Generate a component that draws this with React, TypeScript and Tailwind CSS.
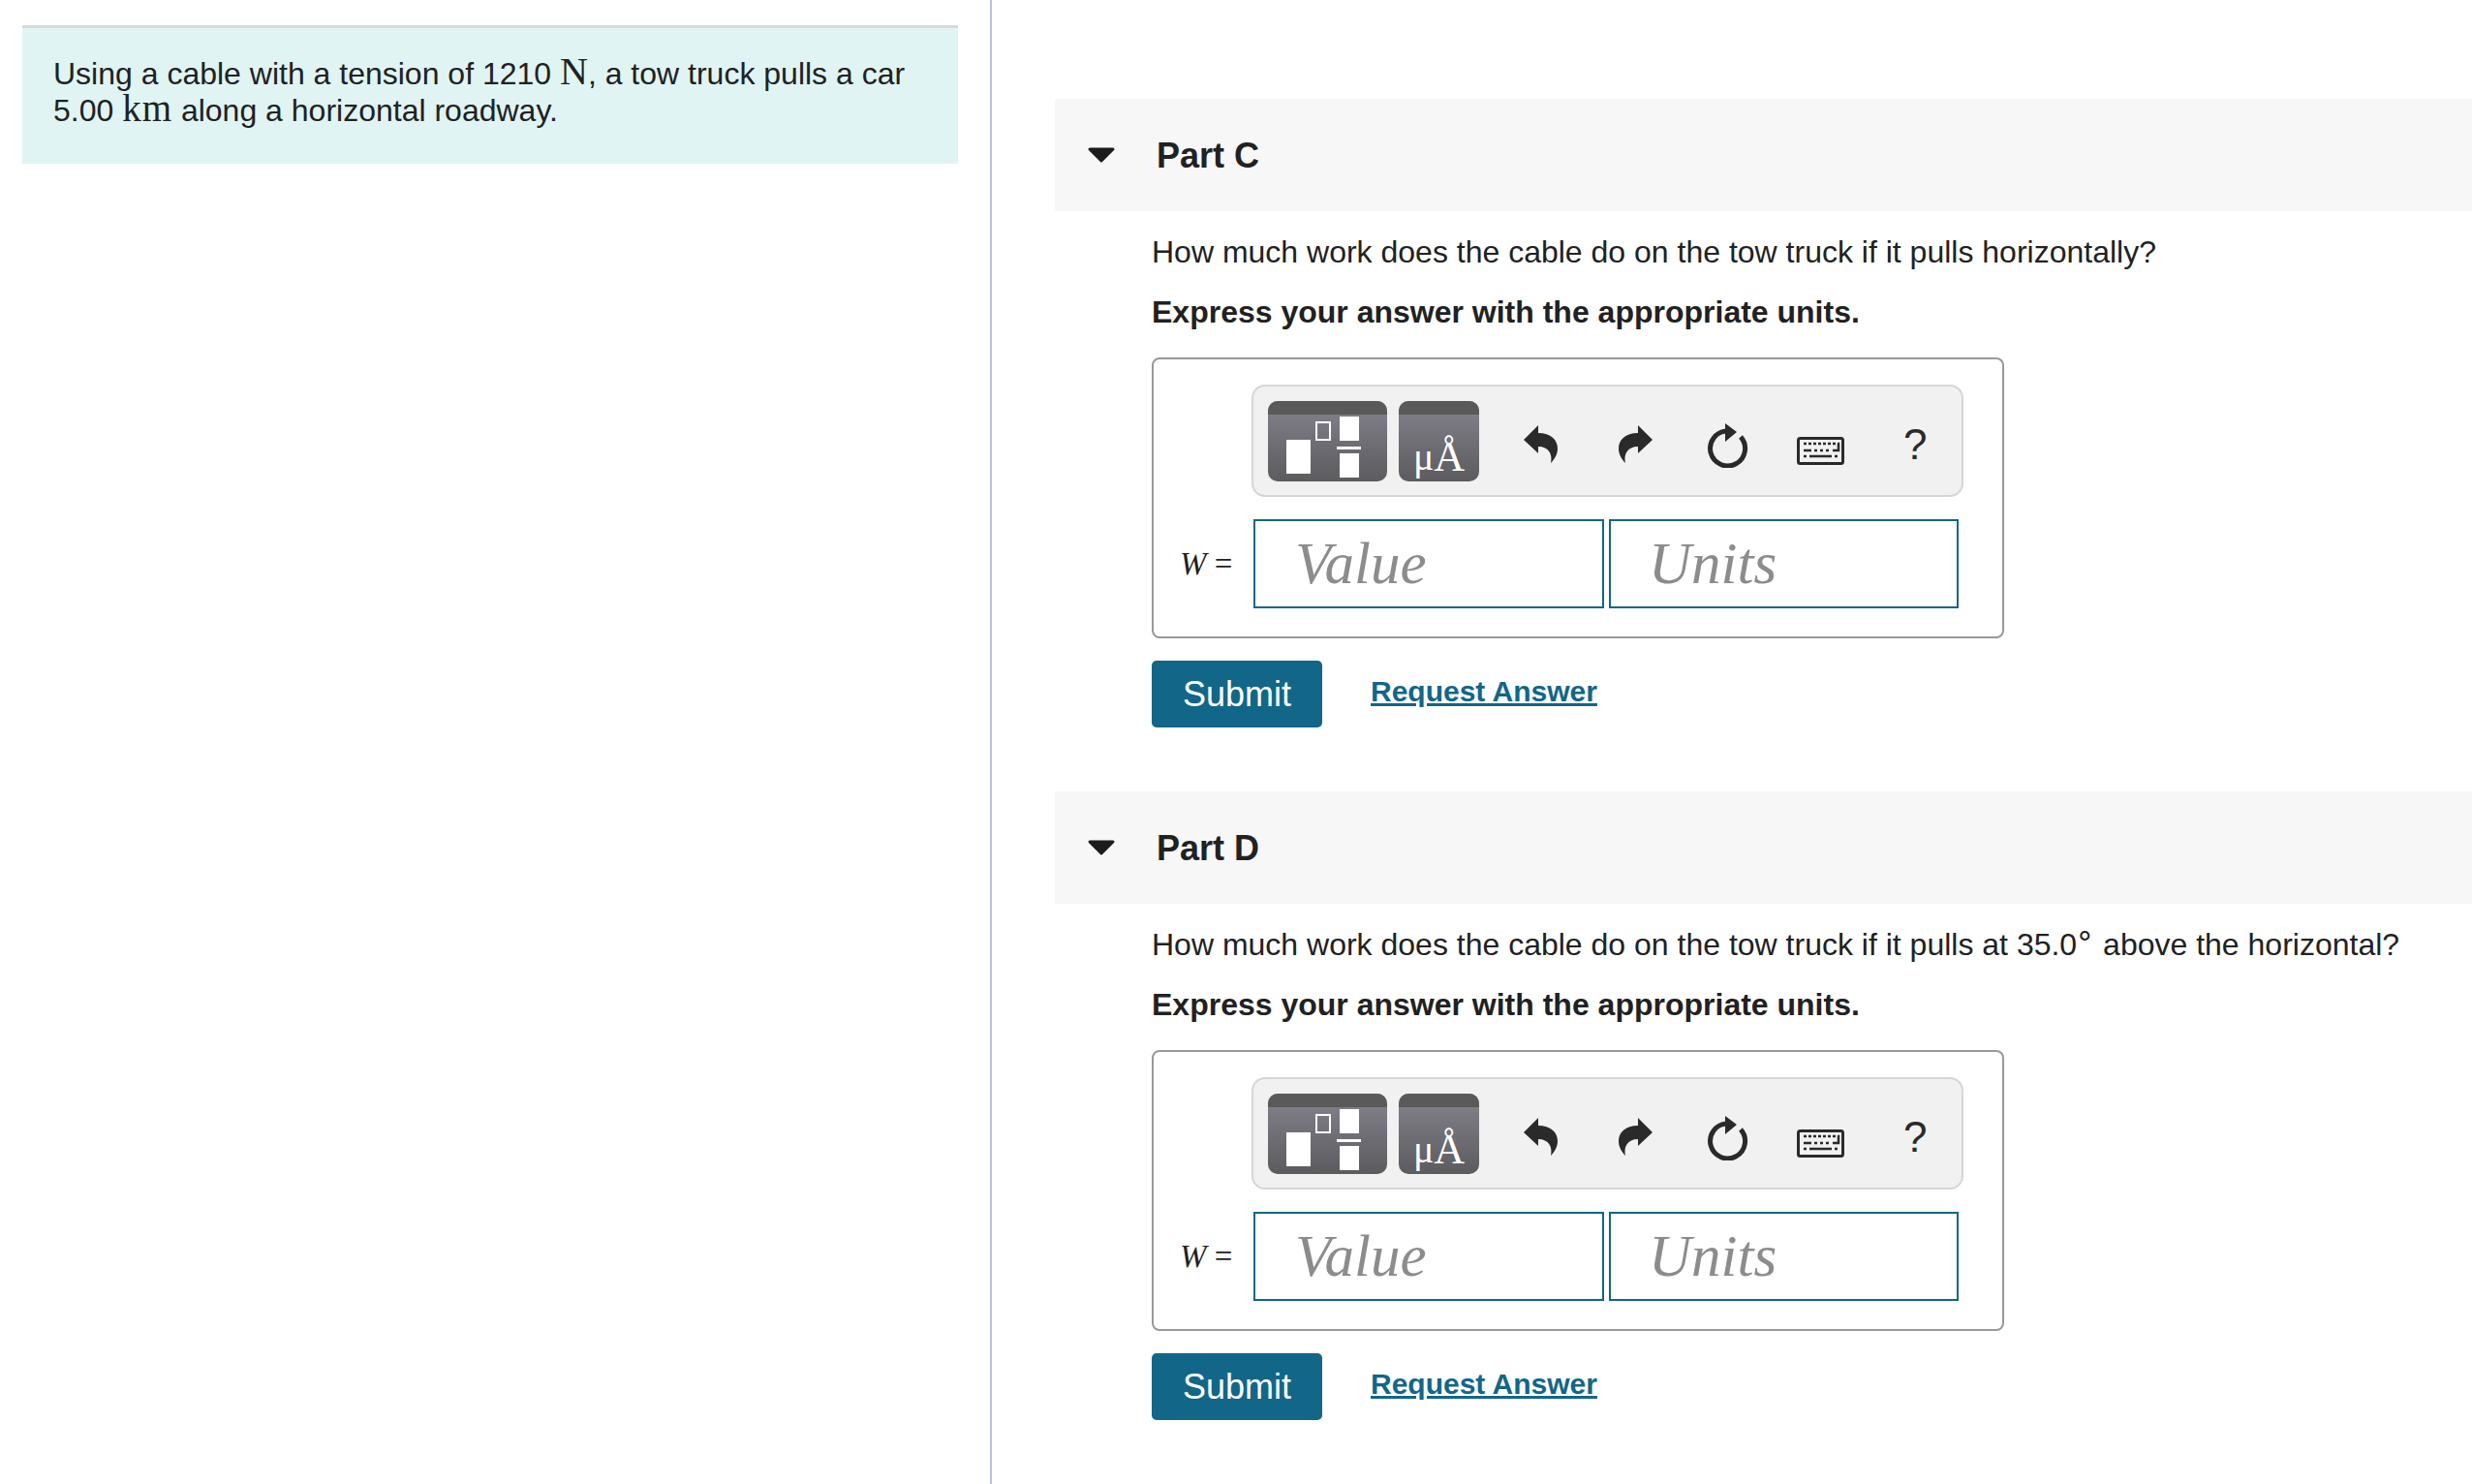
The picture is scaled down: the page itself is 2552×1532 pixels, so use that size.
const sans = "font-['Liberation_Sans',Arial,sans-serif]"

function TemplateButton() {
  return (
    <div className="flex h-[83px] w-[123px] flex-col overflow-hidden rounded-[10px] bg-gradient-to-b from-[#85848f] to-[#5c5b5e]">
      <div className="h-[14px] bg-[#5a5a5a]" />
      <svg width="123" height="69" viewBox="0 0 123 69">
        <rect x="19" y="26" width="25" height="35" fill="#fff" />
        <rect x="50" y="8" width="14" height="18" fill="none" stroke="#fff" strokeWidth="2" />
        <rect x="74" y="2" width="20" height="25" fill="#fff" />
        <rect x="71" y="33" width="25" height="3" fill="#fff" />
        <rect x="74" y="40" width="20" height="25" fill="#fff" />
      </svg>
    </div>
  )
}

function SymbolButton() {
  return (
    <div className="flex h-[83px] w-[83px] flex-col overflow-hidden rounded-[10px] bg-gradient-to-b from-[#85848f] to-[#5c5b5e]">
      <div className="h-[14px] bg-[#5a5a5a]" />
      <div className="flex flex-1 items-end justify-center font-['Liberation_Serif',serif] text-[44px] leading-[50px] text-white">
        <span className="text-[40px]">μ</span>
        <span>Å</span>
      </div>
    </div>
  )
}

function Undo({ flip }: { flip?: boolean }) {
  return (
    <svg width="35" height="40" viewBox="0 0 35 40" className={flip ? "-scale-x-100" : ""}>
      <path d="M0 15 L15 0 V8 C28 8 35 15 35 24 C35 30 32 35 28 39 C30 30 26 22 15 22 V29 Z" fill="#2a2a2a" />
    </svg>
  )
}

function Reset() {
  return (
    <svg width="44" height="46" viewBox="0 0 44 46">
      <path d="M22 8 A18 18 0 1 0 36 14" fill="none" stroke="#2a2a2a" strokeWidth="5" />
      <path d="M20 0 L32 9 L20 19 Z" fill="#2a2a2a" />
    </svg>
  )
}

function Keyboard() {
  return (
    <svg width="49" height="29" viewBox="0 0 49 29">
      <rect x="1.5" y="1.5" width="46" height="26" rx="2" fill="none" stroke="#2a2a2a" strokeWidth="3" />
      <path d="M7 7h3M12 7h3M17 7h3M22 7h3M27 7h3M32 7h3M37 7h3M42 7h1V14H37M7 14h8M18 14h3M24 14h3M30 14h3M7 20h3M13 20h23M39 20h3" stroke="#2a2a2a" strokeWidth="2.5" fill="none" />
    </svg>
  )
}

function AnswerBox() {
  return (
    <div className="mt-[27px] h-[290px] w-[880px] rounded-[8px] border-2 border-[#999] pl-[27px] pt-[26px]">
      <div className="ml-[74px] flex h-[116px] w-[735px] items-center rounded-[14px] border-2 border-[#d6d6d6] bg-[#f1f1f1] pl-[15px]">
        <TemplateButton />
        <div className="ml-[12px]">
          <SymbolButton />
        </div>
        <div className="ml-[46px] mt-[8px]">
          <Undo />
        </div>
        <div className="ml-[63px] mt-[8px]">
          <Undo flip />
        </div>
        <div className="ml-[55px] mt-[10px]">
          <Reset />
        </div>
        <div className="ml-[50px] mt-[21px]">
          <Keyboard />
        </div>
        <span className={`${sans} ml-[61px] mt-[8px] text-[44px] leading-none text-[#2a2a2a]`}>?</span>
      </div>
      <div className="mt-[23px] flex items-center">
        <div className="w-[76px] font-['Liberation_Serif',serif] text-[33px] leading-none text-[#212121]">
          <i>W</i> =
        </div>
        <div className="flex h-[92px] w-[362px] items-center border-2 border-[#126688] pl-[41px] font-['Liberation_Serif',serif] text-[61px] italic text-[#8c8c8c]">
          Value
        </div>
        <div className="ml-[5px] flex h-[92px] w-[361px] items-center border-2 border-[#126688] pl-[39px] font-['Liberation_Serif',serif] text-[61px] italic text-[#8c8c8c]">
          Units
        </div>
      </div>
    </div>
  )
}

function Part({ name, question }: { name: string; question: React.ReactNode }) {
  return (
    <section className="mb-[66px]">
      <div className="flex h-[116px] items-center bg-[#f7f7f7]">
        <svg width="30" height="18" viewBox="0 0 30 18" className="ml-[33px]">
          <path d="M3 3 H27 L15 15 Z" fill="#1c1c1c" stroke="#1c1c1c" strokeWidth="3" strokeLinejoin="round" />
        </svg>
        <h2 className="ml-[42px] pt-[1px] text-[36px] font-bold text-[#212121]">{name}</h2>
      </div>
      <div className="pl-[100px]">
        <p className="mt-[22px] whitespace-nowrap text-[32px] leading-[40px] text-[#212121]">{question}</p>
        <p className="mt-[22px] text-[32px] font-bold leading-[40px] text-[#212121]">Express your answer with the appropriate units.</p>
        <AnswerBox />
        <div className="mt-[23px] flex items-start">
          <button className="h-[69px] w-[176px] rounded-[5px] bg-[#126688] text-[36px] text-white">Submit</button>
          <a className="ml-[50px] mt-[12px] text-[30px] font-bold leading-[40px] text-[#126688] underline">Request Answer</a>
        </div>
      </div>
    </section>
  )
}

export default function App() {
  return (
    <div className={`${sans} flex h-[1532px] w-[2552px] overflow-hidden bg-white`}>
      <aside className="h-full w-[1024px] shrink-0 border-r-2 border-[#b4c2d8] pl-[23px] pt-[26px]">
        <div className="h-[143px] w-[966px] whitespace-nowrap border-t-[3px] border-[#d9d9d9] bg-[#e0f4f3] px-[32px] pt-[28px] text-[32px] leading-[38px] text-[#212121]">
          Using a cable with a tension of 1210 <span className="font-['Liberation_Serif',serif] text-[40px] leading-[0]">N</span>, a tow truck pulls a car
          <br />
          5.00 <span className="font-['Liberation_Serif',serif] text-[39px] leading-[0] tracking-[1px]">km</span> along a horizontal roadway.
        </div>
      </aside>
      <main className="flex-1 pl-[65px] pt-[102px]">
        <Part name="Part C" question="How much work does the cable do on the tow truck if it pulls horizontally?" />
        <Part
          name="Part D"
          question={
            <>
              How much work does the cable do on the tow truck if it pulls at 35.0
              <span className="relative top-[-10px] ml-[-2px] font-['DejaVu_Sans',sans-serif] text-[32px] leading-none">∘</span> above the horizontal?
            </>
          }
        />
      </main>
    </div>
  )
}
